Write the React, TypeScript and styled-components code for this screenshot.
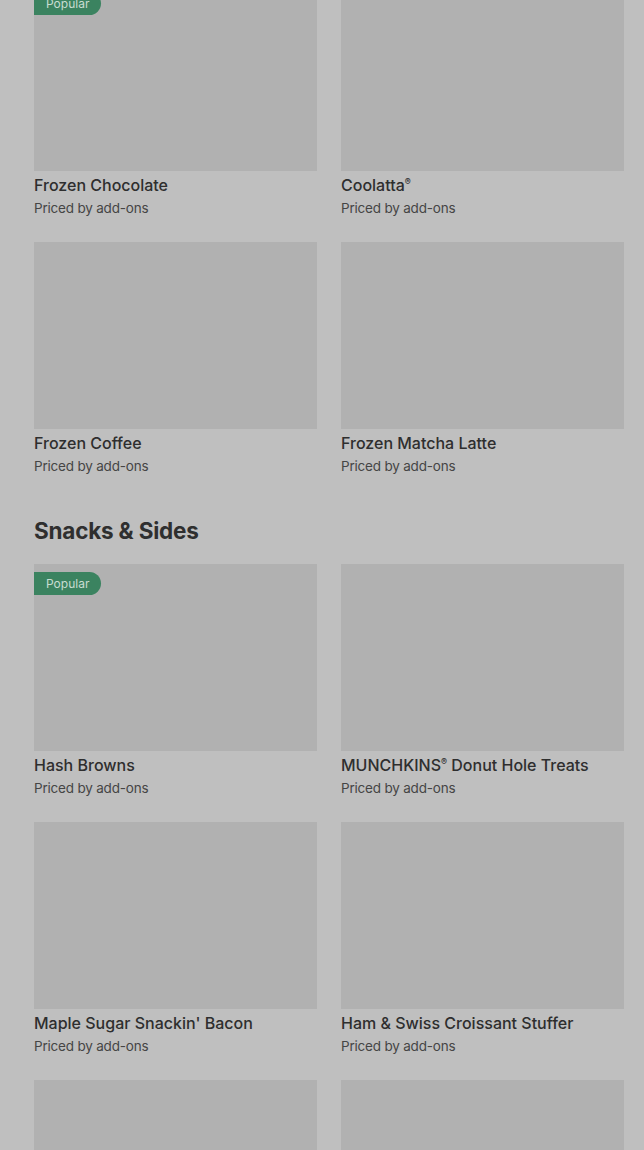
import React from "react";
import styled, { createGlobalStyle } from "styled-components";

const GlobalStyle = createGlobalStyle`
  html, body {
    margin: 0;
    padding: 0;
    background: #bfbfbf;
    overflow: hidden;
  }
  body {
    font-family: Inter, "Noto Sans", "Liberation Sans", sans-serif;
    -webkit-font-smoothing: antialiased;
  }
`;

const Page = styled.div`
  height: 1150px;
  overflow: hidden;
  padding: 0 20px 0 34px;
  background: #bfbfbf;
`;

// the list is scrolled a little, so the first row starts above the top edge
const Scroller = styled.div`
  margin-top: -16px;
`;

const Section = styled.section`
  display: flex;
  flex-direction: column;
`;

const SectionTitle = styled.h2`
  margin: 41px 0 19px;
  font-size: 22.5px;
  line-height: 28px;
  font-weight: 700;
  letter-spacing: -0.2px;
  color: #2f2f2f;
`;

const Grid = styled.div`
  display: grid;
  grid-template-columns: 283px 283px;
  column-gap: 24px;
  row-gap: 24px;
`;

const Card = styled.div`
  display: flex;
  flex-direction: column;
`;

const Thumb = styled.div`
  position: relative;
  height: 187px;
  background: #b1b1b1;
`;

const Badge = styled.span`
  position: absolute;
  top: 8px;
  left: 0;
  height: 23px;
  padding: 0 12px;
  display: flex;
  align-items: center;
  border-radius: 0 12px 12px 0;
  background: #3b8360;
  color: #c8ddd1;
  font-size: 12px;
  line-height: 1;
`;

const Name = styled.div`
  margin-top: 4px;
  font-size: 16px;
  line-height: 20px;
  font-weight: 500;
  color: #2e2e2e;
  white-space: nowrap;
`;

const Sub = styled.div`
  margin-top: 3px;
  font-size: 13.5px;
  line-height: 20px;
  color: #454545;
  letter-spacing: -0.2px;
`;

const Reg = styled.sup`
  font-size: 9px;
  vertical-align: 6px;
  line-height: 0;
`;

interface Item {
  name?: React.ReactNode;
  popular?: boolean;
}

const drinks: Item[] = [
  { name: "Frozen Chocolate", popular: true },
  { name: <>Coolatta<Reg>®</Reg></> },
  { name: "Frozen Coffee" },
  { name: "Frozen Matcha Latte" },
];

const snacks: Item[] = [
  { name: "Hash Browns", popular: true },
  { name: <>MUNCHKINS<Reg>®</Reg> Donut Hole Treats</> },
  { name: "Maple Sugar Snackin' Bacon" },
  { name: "Ham & Swiss Croissant Stuffer" },
  {},
  {},
];

function ItemCard({ item }: { item: Item }) {
  return (
    <Card>
      <Thumb>{item.popular && <Badge>Popular</Badge>}</Thumb>
      {item.name && (
        <>
          <Name>{item.name}</Name>
          <Sub>Priced by add-ons</Sub>
        </>
      )}
    </Card>
  );
}

export default function App() {
  return (
    <>
      <GlobalStyle />
      <Page>
        <Scroller>
          <Section>
            <Grid>
              {drinks.map((d, i) => (
                <ItemCard key={i} item={d} />
              ))}
            </Grid>
          </Section>
          <Section>
            <SectionTitle>Snacks &amp; Sides</SectionTitle>
            <Grid>
              {snacks.map((d, i) => (
                <ItemCard key={i} item={d} />
              ))}
            </Grid>
          </Section>
        </Scroller>
      </Page>
    </>
  );
}
